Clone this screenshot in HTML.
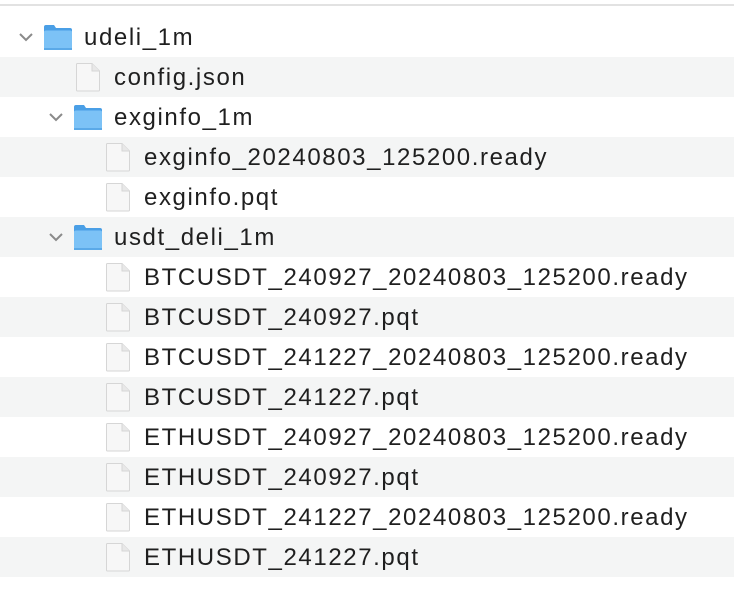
<!DOCTYPE html>
<html><head><style>
html,body{margin:0;padding:0;background:#fff;width:734px;height:612px;overflow:hidden}
.top{position:absolute;left:0;top:4px;width:734px;height:2px;background:#e2e2e2}
.row{position:absolute;left:0;width:734px;height:40px}
.row.s{background:#f4f5f5}
.t{position:absolute;top:1px;line-height:40px;font-family:"Liberation Sans",sans-serif;font-size:24px;letter-spacing:1.6px;color:#1f1f1f;white-space:nowrap}
svg{position:absolute}
</style></head><body>
<div class="top"></div>
<div id="c"></div>
<script>
var rows=[
[0,'udeli_1m','d'],[1,'config.json','f'],[1,'exginfo_1m','d'],[2,'exginfo_20240803_125200.ready','f'],[2,'exginfo.pqt','f'],
[1,'usdt_deli_1m','d'],[2,'BTCUSDT_240927_20240803_125200.ready','f'],[2,'BTCUSDT_240927.pqt','f'],
[2,'BTCUSDT_241227_20240803_125200.ready','f'],[2,'BTCUSDT_241227.pqt','f'],[2,'ETHUSDT_240927_20240803_125200.ready','f'],
[2,'ETHUSDT_240927.pqt','f'],[2,'ETHUSDT_241227_20240803_125200.ready','f'],[2,'ETHUSDT_241227.pqt','f']];
var h='';
rows.forEach(function(r,i){
 var y=17+i*40,ind=r[0]*30;
 h+='<div class="row'+(i%2?' s':'')+'" style="top:'+y+'px">';
 if(r[2]=='d'){
  h+='<svg style="left:'+(18+ind)+'px;top:14px" width="16" height="12"><path d="M2 3 L8 9 L14 3" fill="none" stroke="#8a8a8a" stroke-width="2"/></svg>';
  h+='<svg style="left:'+(43+ind)+'px;top:6px" width="30" height="28"><path d="M1 4 Q1 2 3 2 L11 2 L13 5 L27 5 Q29 5 29 7 L29 25 Q29 27 27 27 L3 27 Q1 27 1 25 Z" fill="#4a9fe6"/><path d="M1 9 Q1 7.5 3 7.5 L27 7.5 Q29 7.5 29 9 L29 25 Q29 27 27 27 L3 27 Q1 27 1 25 Z" fill="#7cc2f6"/><rect x="1" y="25" width="28" height="2" fill="#5aa9e8"/></svg>';
  h+='<div class="t" style="left:'+(84+ind)+'px">'+r[1]+'</div>';
 } else {
  h+='<svg style="left:'+(75+ind-30)+'px;top:5px" width="26" height="30"><path d="M1.5 2.5 Q1.5 1.5 2.5 1.5 L17 1.5 L24.5 9 L24.5 28 Q24.5 29 23.5 29 L2.5 29 Q1.5 29 1.5 28 Z" fill="#f7f7f7" stroke="#d6d6d6"/><path d="M17 1.5 L17 9 L24.5 9" fill="#e8e8e8" stroke="#d6d6d6"/></svg>';
  h+='<div class="t" style="left:'+(84+ind)+'px">'+r[1]+'</div>';
 }
 h+='</div>';
});
document.getElementById('c').innerHTML=h;
</script>
</body></html>
